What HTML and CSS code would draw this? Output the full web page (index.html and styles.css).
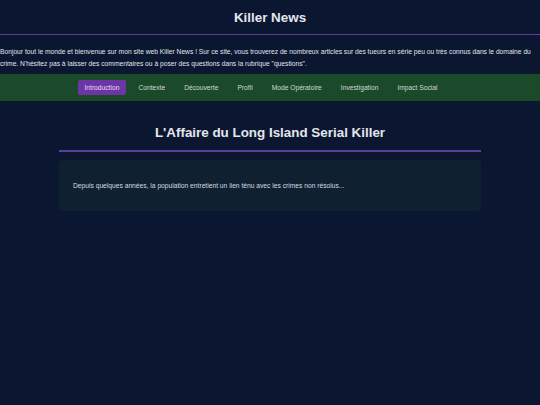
FILE: index.html
```html
<!DOCTYPE html>
<html lang="fr">
<head>
<meta charset="utf-8">
<title>Killer News</title>
<link rel="stylesheet" href="styles.css">
</head>
<body>
<header class="site-header">
  <h1 class="site-title">Killer News</h1>
</header>
<p class="intro">Bonjour tout le monde et bienvenue sur mon site web Killer News ! Sur ce site, vous trouverez de nombreux articles sur des tueurs en série peu ou très connus dans le domaine du crime. N'hésitez pas à laisser des commentaires ou à poser des questions dans la rubrique "questions".</p>
<nav class="nav">
  <ul class="nav-list">
    <li><a class="nav-link active" href="#">Introduction</a></li>
    <li><a class="nav-link" href="#">Contexte</a></li>
    <li><a class="nav-link" href="#">Découverte</a></li>
    <li><a class="nav-link" href="#">Profil</a></li>
    <li><a class="nav-link" href="#">Mode Opératoire</a></li>
    <li><a class="nav-link" href="#">Investigation</a></li>
    <li><a class="nav-link" href="#">Impact Social</a></li>
  </ul>
</nav>
<main class="main">
  <h2 class="article-title">L'Affaire du Long Island Serial Killer</h2>
  <section class="card">
    <p class="card-text">Depuis quelques années, la population entretient un lien ténu avec les crimes non résolus...</p>
  </section>
</main>
</body>
</html>
```

FILE: styles.css
```css
html, body {
  margin: 0;
  padding: 0;
  background: #0b1730;
  color: #dfe3ea;
  font-family: "Liberation Sans", Arial, sans-serif;
}
.site-header {
  border-bottom: 1.5px solid #5c3f9c;
  height: 34px;
  display: flex;
  align-items: center;
  justify-content: center;
}
.site-title {
  margin: 0;
  font-size: 13.4px;
  font-weight: bold;
  color: #e3e6ec;
}
.intro {
  margin: 0;
  padding: 11px 0 0;
  font-size: 6.7px;
  line-height: 12px;
  height: 24px;
  color: #e0e4ea;
}
.nav {
  background: #1b4a2b;
  padding: 6px 0;
  margin-top: 3.5px;
}
.nav-list {
  list-style: none;
  margin: 0;
  padding: 0 18px 0 0;
  display: flex;
  justify-content: center;
  gap: 6px;
}
.nav-link {
  display: block;
  padding: 0 6.5px;
  height: 15px;
  line-height: 15px;
  font-size: 6.7px;
  color: #cfd8d2;
  text-decoration: none;
  border-radius: 2px;
}
.nav-link.active {
  background: #6b36a3;
  color: #e8def3;
}
.main {
  width: 422px;
  margin: 0 auto;
  padding-top: 21px;
}
.article-title {
  margin: 0;
  font-size: 13.4px;
  font-weight: bold;
  text-align: center;
  color: #e3e6ec;
  line-height: 22px;
  padding-bottom: 6px;
  border-bottom: 2px solid #5c3f9c;
}
.card {
  margin-top: 8px;
  background: #0f2030;
  border-radius: 4px;
  height: 51px;
  display: flex;
  align-items: center;
  padding: 0 14px;
}
.card-text {
  margin: 0;
  font-size: 6.7px;
  color: #d5dae0;
}
```
